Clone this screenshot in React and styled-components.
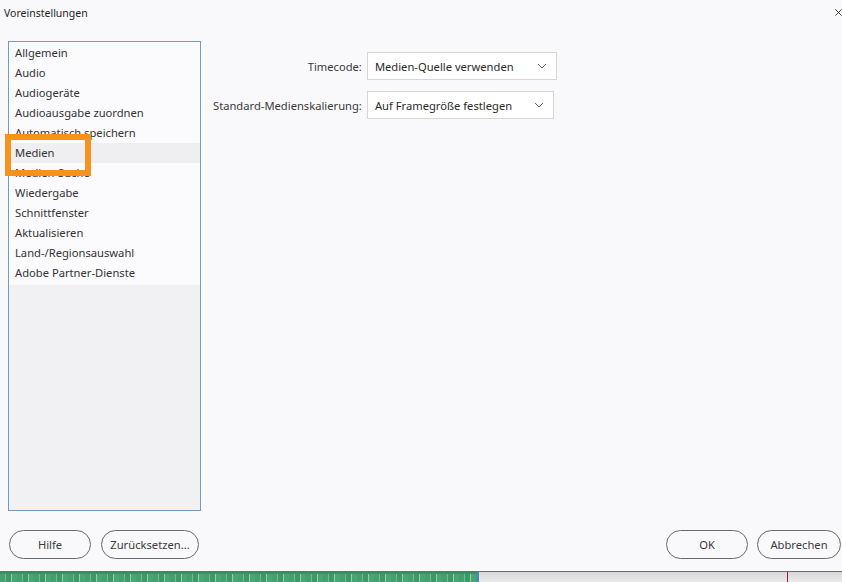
import React from "react";
import styled, { createGlobalStyle } from "styled-components";

const Global = createGlobalStyle`
  html, body { margin: 0; padding: 0; }
  body {
    width: 842px; height: 582px; overflow: hidden;
    background: #f9f8fa;
    font-family: "Noto Sans", "Open Sans", sans-serif;
    color: #2f2f2f;
  }
`;

const FONT = 11.2;

const Dialog = styled.div`
  width: 842px;
  height: 571px;
  display: flex;
  flex-direction: column;
  background: #f9f8fa;
  position: relative;
`;

const TitleBar = styled.div`
  height: 26px;
  display: flex;
  align-items: center;
  justify-content: space-between;
  padding: 0 0 1px 4px;
  box-sizing: border-box;
  font-size: 10.5px;
  color: #1f1f1f;
`;

const Close = styled.div`
  width: 7px;
  height: 26px;
  display: flex;
  align-items: center;
  justify-content: flex-start;
  overflow: hidden;
`;

const Body = styled.div`
  flex: 1;
  display: flex;
  padding: 15px 0 0 8px;
  gap: 12px;
`;

const ListBox = styled.div`
  width: 191px;
  height: 468px;
  border: 1px solid #6f9cc2;
  background: #f1f0f2;
  display: flex;
  flex-direction: column;
  position: relative;
`;

const Items = styled.div`
  background: #fbfafc;
  display: flex;
  flex-direction: column;
  padding: 1px 0 2px;
`;

const Item = styled.div`
  height: 20px;
  line-height: 20px;
  padding-left: 6px;
  font-size: ${FONT}px;
  color: #333;
  background: ${(p) => (p.$active ? "#efeef0" : "transparent")};
`;

const Highlight = styled.div`
  position: absolute;
  left: -4px;
  top: 92px;
  width: 74px;
  height: 30px;
  border: 6px solid #f7931d;
`;

const Form = styled.div`
  display: grid;
  grid-template-columns: max-content max-content;
  column-gap: 5px;
  row-gap: 11px;
  align-items: center;
  align-content: start;
  padding-top: 11px;
`;

const Label = styled.div`
  text-align: right;
  font-size: ${FONT}px;
  color: #3a3a3a;
`;

const Select = styled.div`
  width: ${(p) => p.$w}px;
  height: 28px;
  box-sizing: border-box;
  border: 1px solid #d6d5d8;
  background: #ffffff;
  display: flex;
  align-items: center;
  justify-content: space-between;
  padding: 0 9px 0 7px;
  font-size: ${FONT}px;
  color: #2a2a2a;
`;

const Footer = styled.div`
  height: 60px;
  display: flex;
  align-items: flex-start;
  justify-content: space-between;
  padding: 19px 1px 0 9px;
  box-sizing: border-box;
`;

const Group = styled.div`
  display: flex;
  gap: ${(p) => p.$gap}px;
`;

const Button = styled.button`
  width: ${(p) => p.$w}px;
  height: 29px;
  box-sizing: border-box;
  border: 1px solid #6a6a6a;
  border-radius: 15px;
  background: #f9f8fa;
  font-family: "Noto Sans", "Open Sans", sans-serif;
  font-size: ${FONT}px;
  color: #3a3a3a;
  padding: 0;
`;

const Strip = styled.div`
  height: 11px;
  border-top: 1px solid #6d6d6d;
  display: flex;
  background: linear-gradient(#d8d8d8, #ececec);
`;

const Wave = styled.div`
  width: 477px;
  border-right: 2px solid #4b86c4;
  background:
    linear-gradient(#3e8f62 0 2px, transparent 2px),
    repeating-linear-gradient(90deg, #45a070 0 5px, #6cbf93 5px 6px, #3f9868 6px 11px, #8ad2ab 11px 12px, #4aa574 12px 17px);
`;

const Marker = styled.div`
  width: 1px;
  margin-left: 308px;
  background: #a01c2c;
`;

const Chevron = () => (
  <svg width="10" height="6" viewBox="0 0 10 6">
    <path d="M1 1 L5 5 L9 1" fill="none" stroke="#666" strokeWidth="1" />
  </svg>
);

const items = [
  "Allgemein",
  "Audio",
  "Audiogeräte",
  "Audioausgabe zuordnen",
  "Automatisch speichern",
  "Medien",
  "Medien-Suche",
  "Wiedergabe",
  "Schnittfenster",
  "Aktualisieren",
  "Land-/Regionsauswahl",
  "Adobe Partner-Dienste",
];

export default function App() {
  return (
    <>
      <Global />
      <Dialog>
        <TitleBar>
          <span>Voreinstellungen</span>
          <Close>
            <svg width="9" height="9" viewBox="0 0 9 9">
              <path d="M0.5 0.5 L8.5 8.5 M8.5 0.5 L0.5 8.5" stroke="#222" strokeWidth="1.1" />
            </svg>
          </Close>
        </TitleBar>
        <Body>
          <ListBox>
            <Items>
              {items.map((t) => (
                <Item key={t} $active={t === "Medien"}>{t}</Item>
              ))}
            </Items>
            <Highlight />
          </ListBox>
          <Form>
            <Label>Timecode:</Label>
            <Select $w={190}>
              <span>Medien-Quelle verwenden</span>
              <Chevron />
            </Select>
            <Label>Standard-Medienskalierung:</Label>
            <Select $w={187}>
              <span>Auf Framegröße festlegen</span>
              <Chevron />
            </Select>
          </Form>
        </Body>
        <Footer>
          <Group $gap={10}>
            <Button $w={82}>Hilfe</Button>
            <Button $w={98}>Zurücksetzen...</Button>
          </Group>
          <Group $gap={9}>
            <Button $w={82}>OK</Button>
            <Button $w={84}>Abbrechen</Button>
          </Group>
        </Footer>
      </Dialog>
      <Strip>
        <Wave />
        <Marker />
      </Strip>
    </>
  );
}
